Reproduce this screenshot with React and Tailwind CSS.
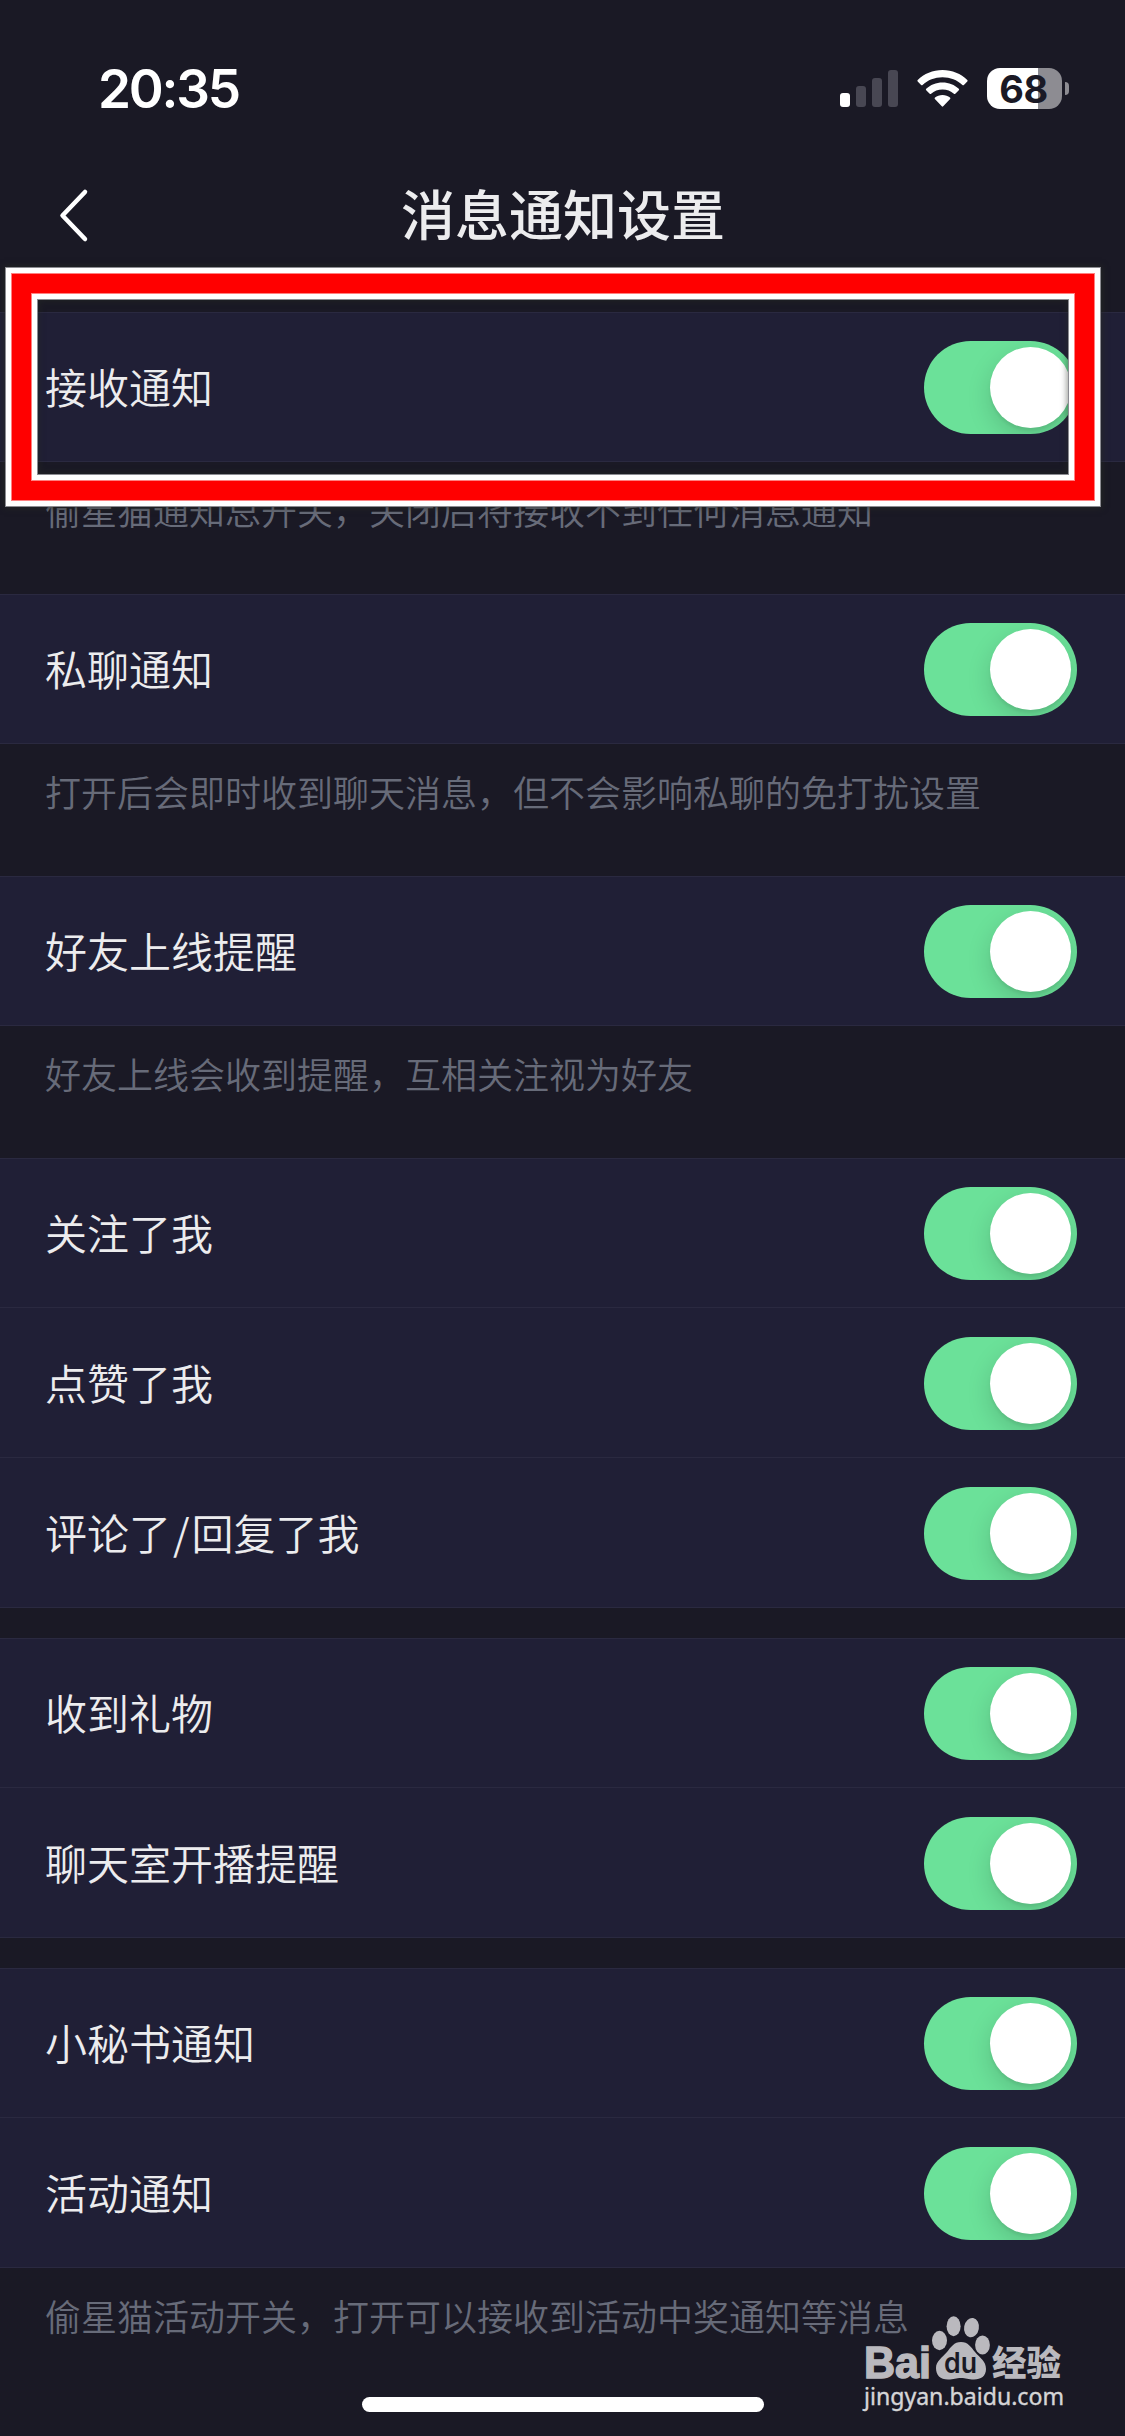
import React, { useState } from 'react'

const groups = [
    {
        items: ['接收通知'],
        note: '偷星猫通知总开关，关闭后将接收不到任何消息通知',
    },
    {
        items: ['私聊通知'],
        note: '打开后会即时收到聊天消息，但不会影响私聊的免打扰设置',
    },
    {
        items: ['好友上线提醒'],
        note: '好友上线会收到提醒，互相关注视为好友',
    },
    { items: ['关注了我', '点赞了我', '评论了/回复了我'] },
    { items: ['收到礼物', '聊天室开播提醒'] },
    {
        items: ['小秘书通知', '活动通知'],
        note: '偷星猫活动开关，打开可以接收到活动中奖通知等消息',
    },
]

const StatusBar = () => {
    return (
        <div className="flex h-[168px] items-start justify-between pl-[98px] pr-14 font-['Inter',sans-serif] text-white">
            <span className="mt-[57px] text-[53px] leading-[64px] font-semibold tracking-[-2.2px]">20:35</span>
            <div className="mt-[68px] flex h-[41px] items-start">
                <svg className="mt-[2px] h-[37px] w-[58px]" viewBox="0 0 58 37">
                    <rect x="0" y="23" width="10" height="14" rx="3" fill="#fff" />
                    <rect x="16" y="16" width="10" height="21" rx="3" fill="#484753" />
                    <rect x="32" y="8" width="10" height="29" rx="3" fill="#484753" />
                    <rect x="48" y="0" width="10" height="37" rx="3" fill="#484753" />
                </svg>
                <svg className="mt-[2px] ml-[19px] h-[38px] w-[51px]" viewBox="0 0 51 38" fill="#fff">
                    <path d="M25.5 0C35.2 0 44 3.8 50.3 9.9Q51 10.7 50.3 11.4L46.9 14.9Q46.2 15.6 45.4 14.9C40.2 10 33.2 7.2 25.5 7.2S10.8 10 5.6 14.9Q4.8 15.6 4.1 14.9L.7 11.4Q0 10.7 .7 9.9C7 3.8 15.8 0 25.5 0Z" />
                    <path d="M25.5 12.5C31.9 12.5 37.6 14.9 41.8 18.8Q42.5 19.5 41.8 20.2L38.3 23.7Q37.6 24.4 36.9 23.7C33.9 21 29.9 19.5 25.5 19.5S17.1 21 14.1 23.7Q13.4 24.4 12.7 23.7L9.2 20.2Q8.5 19.5 9.2 18.8C13.4 14.9 19.1 12.5 25.5 12.5Z" />
                    <path d="M25.5 25C28.4 25 31 26 33 27.6Q33.8 28.3 33.1 29L26.2 36.3Q25.5 37 24.8 36.3L17.9 29Q17.2 28.3 18 27.6C20 26 22.6 25 25.5 25Z" />
                </svg>
                <div className="ml-[19px] flex h-[41px] w-[75px] items-center justify-center rounded-[13px] bg-[linear-gradient(90deg,#fff_51px,#8d8c92_51px)] pr-[2px] text-[38px] leading-none font-bold tracking-[-0.5px] text-[#1a1925]">
                    68
                </div>
                <div className="mt-[14px] ml-[3px] h-[13px] w-[4px] rounded-r-full bg-[#8d8c92]" />
            </div>
        </div>
    )
}

const Header = () => {
    return (
        <div className="flex h-[144px] items-start px-[57px]">
            <svg className="mt-[18px] h-[58px] w-[34px]" viewBox="0 0 34 58" fill="none" stroke="#fff" strokeWidth="4.5" strokeLinecap="round" strokeLinejoin="round">
                <path d="M28 6L5.5 29.5L28 53" />
            </svg>
            <h1 className="mt-[9px] mr-[33px] flex-1 text-center text-[54px] leading-[72px] font-medium">消息通知设置</h1>
        </div>
    )
}

const Toggle = ({ on, onChange }) => {
    return (
        <button
            role="switch"
            aria-checked={on}
            onClick={onChange}
            className={`mt-[29px] flex h-[93px] w-[153px] overflow-hidden rounded-full p-[6px] ${on ? 'justify-end bg-[#6be199]' : 'justify-start bg-[#3a3950]'}`}
        >
            <span className="size-[81px] rounded-full bg-white shadow-[0_9px_24px_rgba(0,0,0,0.15),0_3px_3px_rgba(0,0,0,0.06)]" />
        </button>
    )
}

const Row = ({ label }) => {
    const [on, setOn] = useState(true)

    return (
        <div className="flex h-[150px] items-start justify-between pr-12 pl-[45px] shadow-[inset_0_-1px_0_#2a2940]">
            <span className="mt-[44px] text-[42px] leading-[60px] font-[350]">
                {label.split('/').map((part, index) => (
                    <React.Fragment key={part}>
                        {index > 0 && <span className="mx-[2px]">/</span>}
                        {part}
                    </React.Fragment>
                ))}
            </span>
            <Toggle on={on} onChange={() => setOn(!on)} />
        </div>
    )
}

const Group = ({ items, note }) => {
    return (
        <section>
            <div className="relative bg-[#201f36]">
                <div className="absolute inset-x-0 top-0 h-px bg-[#2a2940]" />
                {items.map((label) => (
                    <Row key={label} label={label} />
                ))}
            </div>
            {note ? (
                <p className="h-[132px] pt-[21px] pl-[45px] text-[36px] leading-[52px] font-[350] whitespace-nowrap text-[#676b79]">{note}</p>
            ) : (
                <div className="h-[30px]" />
            )}
        </section>
    )
}

// red frame drawn over the first switch
const Highlight = () => {
    return (
        <div className="pointer-events-none absolute top-[267px] left-[5px] h-[240px] w-[1096px] border border-[#8c8c92] shadow-[0_0_6px_1px_rgba(40,44,36,0.7)]">
            <div className="h-full border-[5px] border-white">
                <div className="h-full border border-[#ff8080]">
                    <div className="h-full border-[19px] border-[#ff0000]">
                        <div className="h-full border border-[#ff8080]">
                            <div className="h-full border-[5px] border-white">
                                <div className="h-full border border-[#8c8c92] shadow-[inset_0_0_6px_1px_rgba(40,44,36,0.5)]" />
                            </div>
                        </div>
                    </div>
                </div>
            </div>
        </div>
    )
}

const Watermark = () => {
    return (
        <svg className="absolute top-[2310px] left-[860px] h-[105px] w-[210px]" viewBox="0 0 210 105" fill="#bab9be">
            <text x="4" y="67.5" fontSize="44" fontWeight="700" textLength="67" lengthAdjust="spacingAndGlyphs" stroke="#bab9be" strokeWidth="1.5" className="font-['Liberation_Sans',sans-serif]">Bai</text>
            <ellipse cx="79.5" cy="30.5" rx="7.5" ry="9.7" />
            <ellipse cx="93.6" cy="16.3" rx="7" ry="10" />
            <ellipse cx="111.5" cy="17.6" rx="7.4" ry="9.7" transform="rotate(10 111.5 17.6)" />
            <ellipse cx="122.5" cy="35" rx="7.4" ry="9.5" />
            <path d="M101 32C108 32 111 37 115 42C120 48 126 51 126 59C126 66 121 69.5 114 69.5C108 69.5 106 68 101 68S94 69.5 88 69.5C80 69.5 76 65 76 58C76 51 82 48 87 42C91 37 94 32 101 32Z" />
            <text x="84" y="62.5" fontSize="28" fontWeight="600" textLength="33" lengthAdjust="spacingAndGlyphs" fill="#1a1925" className="font-['Inter',sans-serif]">du</text>
            <text x="132" y="65.5" fontSize="35" fontWeight="900" textLength="69" lengthAdjust="spacingAndGlyphs" className="font-['Noto_Sans_CJK_SC',sans-serif]">经验</text>
            <text x="4" y="95" fontSize="23.5" textLength="200" lengthAdjust="spacingAndGlyphs" fill="#d5d5d7" stroke="#d5d5d7" strokeWidth="0.4" className="font-['Noto_Sans',sans-serif]">jingyan.baidu.com</text>
        </svg>
    )
}

const App = () => {
    return (
        <div className="relative h-[2436px] w-[1125px] overflow-hidden bg-[#1a1925] font-['Noto_Sans_CJK_SC',sans-serif] text-[#ececee]">
            <StatusBar />
            <Header />
            <main>
                {groups.map((group) => (
                    <Group key={group.items[0]} items={group.items} note={group.note} />
                ))}
            </main>
            <Highlight />
            <Watermark />
            <div className="absolute bottom-[24px] left-[362px] h-[15px] w-[402px] rounded-full bg-white" />
        </div>
    )
}

export default App
